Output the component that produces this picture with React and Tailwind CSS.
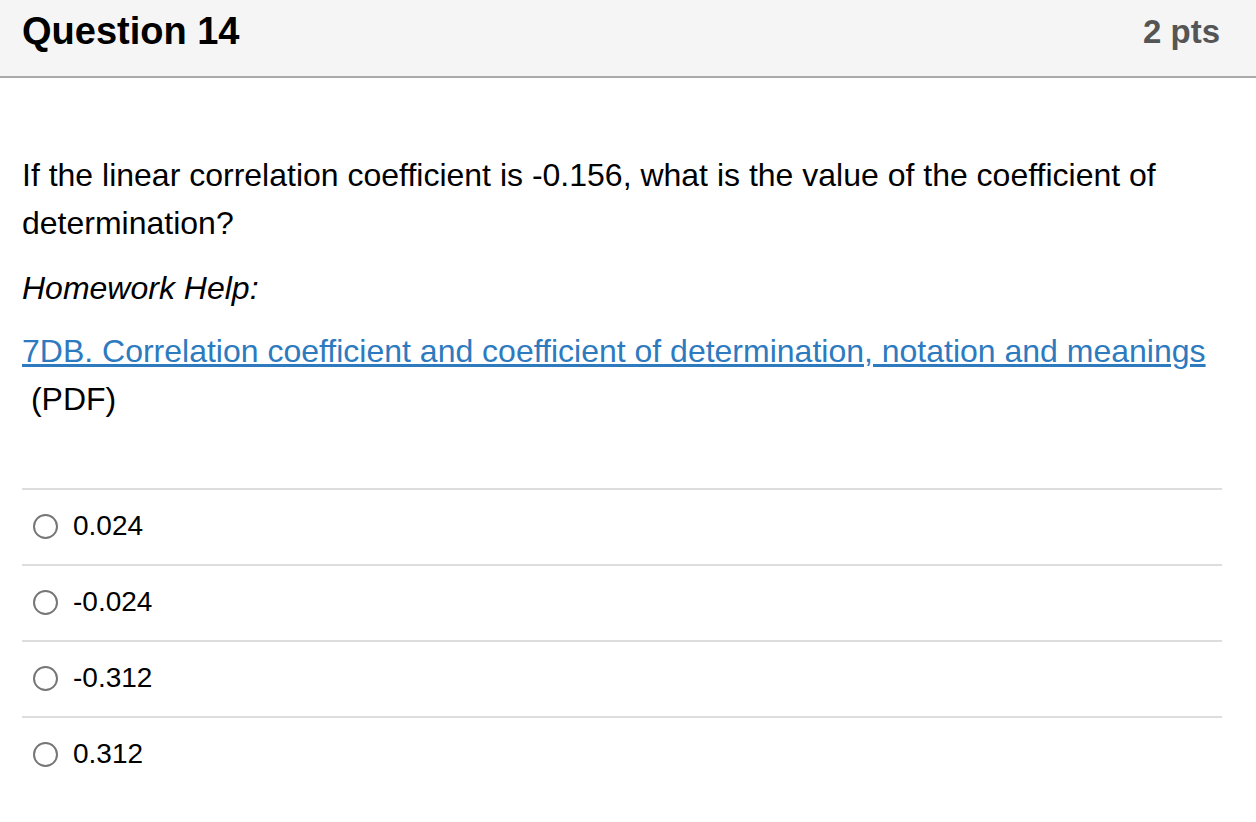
const answers = ['0.024', '-0.024', '-0.312', '0.312']

export default function App() {
  return (
    <div className="min-h-screen bg-white text-black" style={{ fontFamily: '"Liberation Sans", Arial, sans-serif' }}>
      {/* Header */}
      <header className="h-[78px] bg-[#f5f5f5] border-b-2 border-[#aaaaaa] flex items-center justify-between pl-[22px] pr-[36px] pb-[14px]">
        <h2 className="text-[38px] font-bold leading-none">Question 14</h2>
        <span className="text-[33px] font-bold text-[#555555] leading-none">2 pts</span>
      </header>

      <main className="pl-[22px] pr-[34px] pt-[73px]">
        <div className="text-[32px] leading-[48px]">
          <p>If the linear correlation coefficient is -0.156, what is the value of the coefficient of determination?</p>
          <p className="mt-[17px] italic">Homework Help:</p>
          <p className="mt-[15px]">
            <a href="#" className="text-[#2d7abf] underline underline-offset-[2px]">7DB. Correlation coefficient and coefficient of determination, notation and meanings </a>
            <br />
            <span>&nbsp;(PDF)</span>
          </p>
        </div>

        <div className="mt-[65px]">
          {answers.map(a => (
            <label key={a} className="flex items-center gap-[15px] h-[76px] border-t-2 border-[#dddddd] pl-[11px] pb-[2px] text-[28px]">
              <span className="w-[25px] h-[25px] rounded-full border-2 border-[#767676] bg-white" />
              <span>{a}</span>
            </label>
          ))}
        </div>
      </main>
    </div>
  )
}
